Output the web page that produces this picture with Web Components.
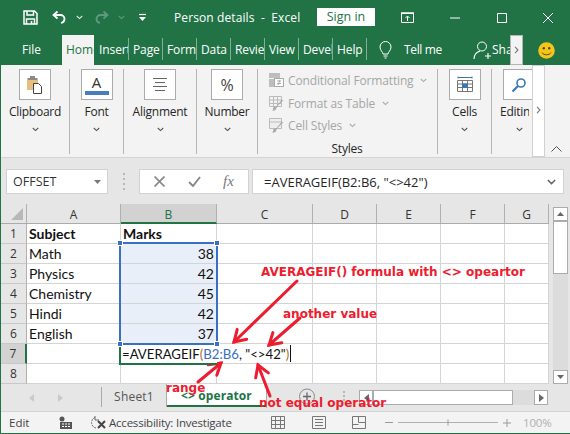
<!DOCTYPE html>
<html><head><meta charset="utf-8"><title>Person details - Excel</title>
<style>
html,body{margin:0;padding:0;background:#fff}
body{font-family:"Noto Sans","Open Sans",sans-serif;font-size:12px}
</style></head><body>
<x-app>
  <x-titlebar></x-titlebar>
  <x-tabs></x-tabs>
  <x-ribbon></x-ribbon>
  <x-formula></x-formula>
  <x-sheet></x-sheet>
  <x-sheetbar></x-sheetbar>
  <x-status></x-status>
  <x-notes></x-notes>
</x-app>
<script>
function def(name, css, html, init){
  customElements.define(name, class extends HTMLElement{
    constructor(){super();const r=this.attachShadow({mode:'open'});
      r.innerHTML='<style>'+css+'</style>'+html; if(init)init(r,this);}
  });
}
const UI='font-family:"Open Sans","Noto Sans",sans-serif;';
const chev=(c='#555')=>`<svg width="7" height="5" viewBox="0 0 7 5"><path d="M.8 1l2.700 2.600L6.200 1" fill="none" stroke="${c}" stroke-width="1.100"/></svg>`;

def('x-app',`:host{display:flex;flex-direction:column;position:relative;width:570px;height:434px;box-sizing:border-box;border-left:1px solid #217346;border-bottom:1px solid #217346;overflow:hidden;background:#f3f3f3}`,`<slot></slot>`);

def('x-titlebar',`:host{display:flex;align-items:center;height:35px;background:#217346;color:#fff;margin-left:-1px;${UI}font-size:12px;position:relative}
svg{display:block;flex:none}
.t{width:143px;flex:none;margin-left:28px;white-space:pre;letter-spacing:.1px}
.s{flex:none;width:58px;height:18px;background:#fff;color:#217346;text-align:center;line-height:18px;font-size:12.500px;margin-top:-2px}
`,`
<svg style="margin-left:23px" width="15" height="15" viewBox="0 0 15 15"><path d="M1 1h10.500L14 3.500V14H1z M4 1v4h6.500V1 M3.500 14V9h8v5 M8.500 11v3" fill="none" stroke="#fff" stroke-width="1.500"/></svg>
<svg style="margin-left:14px" width="15" height="15" viewBox="0 0 15 15"><path d="M5.500 1.500L1.500 5l4 3.500" fill="none" stroke="#fff" stroke-width="1.800"/><path d="M2 5h6.500a4 4 0 0 1 4 4c0 2-1.500 3.500-3.500 4" fill="none" stroke="#fff" stroke-width="1.800"/></svg>
<span style="margin-left:9px;display:flex">${chev('#dfe9e3')}</span>
<svg style="margin-left:11px" width="15" height="15" viewBox="0 0 15 15"><path d="M9.500 1.500l4 3.500-4 3.500" fill="none" stroke="#5f9a7e" stroke-width="1.800"/><path d="M13 5H6.500a4 4 0 0 0-4 4c0 2 1.500 3.500 3.500 4" fill="none" stroke="#5f9a7e" stroke-width="1.800"/></svg>
<span style="margin-left:9px;display:flex">${chev('#5f9a7e')}</span>
<svg style="margin-left:14px" width="7" height="9" viewBox="0 0 7 9"><path d="M0 1.500h7" stroke="#fff" stroke-width="1.200"/><path d="M0 4h7L3.500 8z" fill="#fff"/></svg>
<span class="t">Person details  -  Excel</span>
<span class="s">Sign in</span>
<svg style="margin-left:26px" width="13" height="11" viewBox="0 0 13 11"><path d="M.5 1.500h12v9H.5z" fill="none" stroke="#fff"/><path d="M6.500 9V4.500M4.500 6l2-2 2 2" fill="none" stroke="#fff"/><path d="M0 1h13" stroke="#fff" stroke-width="1.500"/></svg>
<svg style="margin-left:36px" width="10" height="2" viewBox="0 0 10 2"><path d="M0 1h10" stroke="#fff"/></svg>
<svg style="margin-left:37px" width="10" height="10" viewBox="0 0 10 10"><path d="M.5.500h9v9h-9z" fill="none" stroke="#fff"/></svg>
<svg style="margin-left:36px" width="10" height="10" viewBox="0 0 10 10"><path d="M0 0l10 10M10 0L0 10" fill="none" stroke="#fff"/></svg>
`);

def('x-tabs',`:host{display:flex;height:30px;background:#217346;color:#fff;margin-left:-1px;${UI}font-size:12px;position:relative;align-items:stretch}
.f{width:62px;flex:none;padding-left:22px;box-sizing:border-box;line-height:30px}
.tab{flex:none;width:34px;box-sizing:border-box;overflow:hidden;white-space:nowrap;padding-left:4px;line-height:30px;position:relative}
.tab::after{content:"";position:absolute;right:0;top:3px;bottom:5px;width:1px;background:#7fb096}
.on{background:#f3f3f3;color:#217346;width:32px;margin-right:1px}
.on::after{display:none}
.n{letter-spacing:-.1px}
.more{position:absolute;left:510px;top:0;width:13px;height:30px;box-sizing:border-box;background:#f3f3f3;border:1px solid #b5b5b5;display:flex;align-items:center;justify-content:center}
svg{display:block}
.it{display:flex;align-items:center;flex:none;line-height:30px}
`,`
<span class="f">File</span>
<span class="tab on">Home</span>
<span class="tab n">Insert</span><span class="tab n">Page</span><span class="tab n">Formulas</span><span class="tab n">Data</span><span class="tab n">Review</span><span class="tab n">View</span><span class="tab n">Developer</span><span class="tab n">Help</span>
<span class="it" style="margin-left:12px"><svg width="13" height="19" viewBox="0 0 13 19"><path d="M4 13c0-2-3-3.500-3-7a5.500 5.500 0 0 1 11 0c0 3.500-3 5-3 7z M4.500 15h4M5.500 17h2" fill="none" stroke="#fff"/></svg></span>
<span class="it" style="margin-left:12px;letter-spacing:-.35px;width:38px;white-space:nowrap">Tell me</span>
<span class="it" style="margin-left:31px"><svg width="18" height="19" viewBox="0 0 18 19"><circle cx="9" cy="5.500" r="4.500" fill="none" stroke="#fff"/><path d="M1 18c0-4 3-7 6-8M12 15h6M15 12v6" fill="none" stroke="#fff" stroke-width="1.100"/></svg></span>
<span class="it" style="margin-left:1px;width:18px;overflow:hidden">Share</span>
<span class="more"><svg width="5" height="8" viewBox="0 0 5 8"><path d="M1 .8L4 4 1 7.200" fill="none" stroke="#777" stroke-width="1.100"/></svg></span>
<svg style="position:absolute;left:538px;top:7px" width="17" height="17" viewBox="0 0 17 17"><circle cx="8.500" cy="8.500" r="8.300" fill="#f5c518"/><circle cx="5.800" cy="6.300" r="1.200" fill="#5a4a10"/><circle cx="11.200" cy="6.300" r="1.200" fill="#5a4a10"/><path d="M4 10.500c1.500 3 7.500 3 9 0" fill="none" stroke="#5a4a10"/></svg>
`);

const big=(label,w,icon,sep=true)=>`<div class="g" style="width:${w}px${sep?'':';border:0'}"><div class="b">${icon}</div><div class="l">${label}</div><div class="c">${chev()}</div></div>`;
def('x-ribbon',`:host{display:flex;height:93px;box-sizing:border-box;background:#f3f3f3;border-bottom:1px solid #d4d4d4;padding:4px 0 3px;color:#262626;${UI}font-size:12px;position:relative}
.g{flex:none;box-sizing:border-box;border-right:1px solid #b5b5b5;display:flex;flex-direction:column;align-items:center;overflow:hidden}
.b{width:32px;height:31px;box-sizing:border-box;border:1px solid #ababab;background:#fff;display:flex;align-items:center;justify-content:center;flex:none}
.l{margin-top:3px;height:18px;line-height:18px;white-space:nowrap;letter-spacing:-.25px}
.c{height:12px;display:flex;align-items:center;justify-content:center;margin-top:2px}
svg{display:block}
.st{width:180px;flex:none;box-sizing:border-box;border-right:1px solid #b5b5b5;position:relative;padding:0 0 0 11px;display:flex;flex-direction:column;color:#a6a6a6}
.r{display:flex;align-items:center;height:23px;gap:4px;white-space:nowrap;letter-spacing:-.15px}
.r svg:last-child{margin-left:3px}
.sl{margin-top:auto;text-align:center;color:#262626;line-height:24px;height:17px;padding-right:12px;letter-spacing:-.2px}
.ed{width:44px;align-items:flex-start;padding-left:11px;border:0}
.ed .l{width:29px;overflow:hidden;margin-left:-3px}
.ed .c{width:32px}
.sc{position:absolute;left:531px;top:0;bottom:0;width:13px;box-sizing:border-box;background:#fff;border:1px solid #d0d0d0;display:flex;align-items:center;justify-content:center;padding-bottom:3px}
.up{position:absolute;left:550px;top:81px}
`,
big('Clipboard',69,`<svg width="16" height="18" viewBox="0 0 16 18"><path d="M0 2h11v12H0z" fill="#e6bf80"/><path d="M3 0h5v2h2v2H1V2h2z" fill="#8a8a8a"/><path d="M6.500 7.500h5l3 3v7h-8z" fill="#fff" stroke="#444"/></svg>`)+
big('Font',54,`<span style="display:flex;flex-direction:column;align-items:center;font-size:15px;line-height:15px;color:#333"><span>A</span><span style="width:24px;height:4px;background:#4a7ebb;margin-top:1px"></span></span>`)+
big('Alignment',73,`<svg width="14" height="13" viewBox="0 0 14 13"><path d="M0 .5h14M2 4.500h10M0 8.500h14M2 12.500h10" stroke="#666"/></svg>`)+
big('Number',61,`<span style="font-size:16px;color:#444;line-height:18px">%</span>`)+
`<div class="st">
<div class="r"><svg width="15" height="15" viewBox="0 0 15 15"><path d="M0 0h11v5H0zM0 6h5v8H0z" fill="#bdbdbd"/><rect x="5.500" y="5.500" width="9" height="8" fill="#fff" stroke="#aaa"/><path d="M8 8h4M8 10.500h4M11 7l-2 5" stroke="#999" fill="none" stroke-width=".8"/></svg><span>Conditional Formatting</span>${chev('#aaa')}</div>
<div class="r"><svg width="15" height="15" viewBox="0 0 15 15"><path d="M.5.500h12v10H.500zM4.500.5v10M8.500.5v10M.5 4h12M.5 7.500h12" fill="none" stroke="#bbb"/><path d="M14.500 4l-6 6-2 4-3 1 1-4 3-1 5-6z" fill="#aaa"/></svg><span>Format as Table</span>${chev('#aaa')}</div>
<div class="r"><svg width="15" height="15" viewBox="0 0 15 15"><path d="M.5.500h12v10H.500zM.5 4h12" fill="#eee" stroke="#bbb"/><path d="M14.500 4l-6 6-2 4-3 1 1-4 3-1 5-6z" fill="#aaa"/></svg><span>Cell Styles</span>${chev('#aaa')}</div>
<div class="sl">Styles</div></div>`+
big('Cells',54,`<svg width="16" height="18" viewBox="0 0 16 18"><path d="M1 1.500h14M1 .5v2M15 .5v2M5 1.500h6" stroke="#3a78b5"/><path d="M.5 4.500h15v11H.5zM.5 8h15M.5 11.500h15M5.500 4.500v11M10.500 4.500v11" fill="#fff" stroke="#777"/><rect x="5" y="7.500" width="6" height="4.500" fill="#3a78b5"/></svg>`)+
`<div class="g ed"><div class="b"><svg width="16" height="16" viewBox="0 0 16 16"><circle cx="10" cy="6" r="4" fill="none" stroke="#3a78b5" stroke-width="1.600"/><path d="M7 9l-5.500 5.500" stroke="#3a78b5" stroke-width="2.200"/></svg></div><div class="l">Editing</div><div class="c">${chev()}</div></div>
<span class="sc"><svg width="5" height="8" viewBox="0 0 5 8"><path d="M1 .8L4 4 1 7.200" fill="none" stroke="#777" stroke-width="1.100"/></svg></span>
<svg class="up" width="11" height="6" viewBox="0 0 11 6"><path d="M.5 5.500l5-5 5 5" fill="none" stroke="#555"/></svg>`);

def('x-formula',`:host{display:flex;height:46px;box-sizing:border-box;background:#e6e6e6;padding:11px 6px 10px 5px;${UI}font-size:12.500px;color:#333}
.box{background:#fff;border:1px solid #d2d2d2;box-sizing:border-box;display:flex;align-items:center;height:25px;flex:none}
.n{width:102px;padding:0 6px;justify-content:space-between;font-size:12.500px}
.d{width:31px;display:flex;flex-direction:column;gap:3px;align-items:center;justify-content:center;flex:none}
.d i{width:2px;height:2px;background:#b8b8b8;display:block}
.fx{width:110px;justify-content:space-around;padding:0 3px;color:#8a8a8a}
.bar{flex:1;margin-left:3px;padding:0 7px 0 11px;justify-content:space-between;color:#262626;white-space:pre;font-size:13px}
em{font:italic 15px "Liberation Serif",serif;color:#777}
svg{display:block}
`,`<div class="box n"><span>OFFSET</span><svg width="7" height="4" viewBox="0 0 7 4"><path d="M0 0h7L3.500 4z" fill="#777"/></svg></div>
<div class="d"><i></i><i></i><i></i><i></i></div>
<div class="box fx"><svg width="11" height="11" viewBox="0 0 11 11"><path d="M.5.500l10 10M10.500.5l-10 10" stroke="#8a8a8a" stroke-width="1.700"/></svg><svg width="13" height="11" viewBox="0 0 13 11"><path d="M1 6l4 4 7-9" fill="none" stroke="#8a8a8a" stroke-width="2"/></svg><em>fx</em></div>
<div class="box bar"><span>=AVERAGEIF(B2:B6, "&lt;&gt;42")</span><svg width="9" height="6" viewBox="0 0 9 6"><path d="M.8 1l3.700 3.600L8.200 1" fill="none" stroke="#666" stroke-width="1.500"/></svg></div>`);

def('x-sheet',`:host{display:flex;height:180px;background:#e6e6e6;font-family:"Lato","Carlito",sans-serif;color:#111}
.g{display:grid;grid-template-columns:26px 94px 96px 96px 64px 64px 64px 44px;grid-template-rows:repeat(9,20px);background:#fff;position:relative;flex:none;height:180px}
.g>div{box-sizing:border-box;border-right:1px solid #d4d4d4;border-bottom:1px solid #d4d4d4;font-size:14px;line-height:19px;padding:0 2px;white-space:nowrap;overflow:visible}
.g>div.h{background:#e6e6e6;border-color:#b0b0b0;text-align:center;${UI}font-size:12px;color:#333;padding:0;line-height:20px}
.g>div.ch{border-bottom:1px solid #ababab;padding-top:2px;line-height:17px;height:20px}
.g>div.rh{border-bottom-color:#c8c8c8;line-height:19px}
.g>div.sel{background:#d2d2d2;color:#217346}
.g>div.cb{border-bottom:2px solid #217346}
.g>div.r7{border-right:2px solid #217346;color:#333}
.g>div.num{text-align:right;background:#e8eff8;padding-right:2px}
.g>div.b{font-weight:700}
.g>div.corner{position:relative}
.corner::after{content:"";position:absolute;right:3px;bottom:3px;border-style:solid;border-width:0 0 12px 12px;border-color:transparent transparent #b8b8b8 transparent}
.g>div.range{grid-area:3/3/8/4;border:2px solid #3a6fc4;margin:-2px 0 0 -2px;position:relative;background:transparent;padding:0;width:99px;height:103px;z-index:2}
.hd{position:absolute;width:4px;height:4px;background:#3a6fc4;border:1px solid #fff}
.g>div.act{grid-area:8/3/9/4;border:0;border-left:2px solid #217346;border-top:2px solid #217346;border-bottom:2px solid #217346;margin:-1px 0 0 -2px;padding:0 0 0 1px;background:#fff;font-size:13.200px;line-height:18px;height:22px;z-index:1}
.act .cr{display:inline-block;width:1px;height:17px;background:#111;vertical-align:top;margin-left:1px}
.act b{font-weight:400;color:#3a6fc4}.act u{text-decoration:none;color:#b06a1f}
.sb{flex:none;width:15px;margin-left:4px;display:flex;flex-direction:column;padding-top:3px;box-sizing:border-box}
.btn{height:14px;box-sizing:border-box;background:#fff;border:1px solid #ababab;display:flex;align-items:center;justify-content:center;flex:none}
.th{height:53px;background:#fff;border:1px solid #ababab;box-sizing:border-box;flex:none}
.tr{flex:1;background:#dcdcdc}
svg{display:block}
`,`<div class="g" id="g"></div><div class="sb"><div class="btn"><svg width="7" height="4" viewBox="0 0 7 4"><path d="M3.500 0L7 4H0z" fill="#666"/></svg></div><div class="th"></div><div class="tr"></div><div class="btn"><svg width="7" height="4" viewBox="0 0 7 4"><path d="M0 0h7L3.500 4z" fill="#666"/></svg></div></div>`,
(r)=>{
  const g=r.getElementById('g');let h='';
  const at=(row,col)=>`style="grid-row:${row};grid-column:${col}"`;
  h+=`<div class="h ch corner" ${at(1,1)}></div>`;
  'ABCDEFG'.split('').forEach((c,k)=>{h+=`<div class="h ch${c=='B'?' sel cb':''}" ${at(1,k+2)}>${c}</div>`});
  const d=[['Subject','Marks'],['Math','38'],['Physics','42'],['Chemistry','45'],['Hindi','42'],['English','37'],['',''],['','']];
  d.forEach((row,i)=>{
    const R=i+2;
    h+=`<div class="h rh${i==6?' sel r7':''}" ${at(R,1)}>${i+1}</div>`;
    h+=`<div class="${i==0?'b':''}" ${at(R,2)}>${row[0]}</div>`;
    h+=`<div class="${i==0?'b':(i<6?'num':'')}" ${at(R,3)}>${row[1]}</div>`;
    for(let k=0;k<5;k++)h+=`<div ${at(R,4+k)}></div>`;
  });
  h+=`<div class="range"><span class="hd" style="left:-4px;top:-4px"></span><span class="hd" style="right:-4px;top:-4px"></span><span class="hd" style="left:-4px;bottom:-4px"></span><span class="hd" style="right:-4px;bottom:-4px"></span></div>`;
  h+=`<div class="act">=AVERAGEIF<u>(</u><b>B2:B6</b>, "&lt;&gt;42"<u>)</u><span class="cr"></span></div>`;
  g.innerHTML=h;
});

def('x-sheetbar',`:host{display:flex;align-items:flex-start;height:27px;box-sizing:border-box;background:#e6e6e6;${UI}font-size:12px;color:#444;position:relative}
svg{display:block;flex:none}
.nav{width:100px;flex:none;display:flex;gap:24px;justify-content:flex-start;padding:10px 0 0 28px;box-sizing:border-box}
.sep{width:1px;height:20px;background:#ababab;margin-top:3px;flex:none}
.t1{width:64px;flex:none;text-align:center;line-height:26px;color:#555;letter-spacing:.2px;height:23px;border-right:1px solid #ababab}
.t2{width:99px;height:23px;flex:none;box-sizing:border-box;background:#fff;border-bottom:2px solid #217346;color:#217346;font-weight:700;text-align:center;line-height:23px;letter-spacing:.1px}
.edge{width:1px;height:24px;background:#ababab;flex:none}
.plus{margin-left:32px;margin-top:4px}
.dots{width:2px;margin-left:27px;margin-top:7px;display:flex;flex-direction:column;gap:2px;flex:none}
.dots i{display:block;width:2px;height:2px;background:#b8b8b8}
.hs{margin-left:14px;margin-top:6px;width:189px;height:15px;display:flex;background:#dcdcdc;flex:none}
.ab{width:14px;height:15px;box-sizing:border-box;border:1px solid #ababab;background:#fff;display:flex;align-items:center;justify-content:center;flex:none}
.hth{width:140px;box-sizing:border-box;border:1px solid #ababab;background:#fff;flex:none}
.sp{flex:1}
`,`<div class="nav"><svg width="5" height="8" viewBox="0 0 5 8"><path d="M5 0v8L0 4z" fill="#c9c9c9"/></svg><svg width="5" height="8" viewBox="0 0 5 8"><path d="M0 0v8l5-4z" fill="#c9c9c9"/></svg></div>
<div class="sep"></div><div class="t1">Sheet1</div><div class="t2">&lt;&gt; operator</div><div class="edge"></div>
<svg class="plus" width="17" height="17" viewBox="0 0 17 17"><circle cx="8" cy="8.500" r="7.500" fill="none" stroke="#8a8a8a"/><path d="M8 4.500v8M4 8.500h8" stroke="#666" stroke-width="1.300"/></svg>
<div class="dots"><i></i><i></i><i></i></div>
<div class="hs"><div class="ab"><svg width="5" height="8" viewBox="0 0 5 8"><path d="M5 0v8L0 4z" fill="#666"/></svg></div><div class="hth"></div><div class="sp"></div><div class="ab"><svg width="5" height="8" viewBox="0 0 5 8"><path d="M0 0v8l5-4z" fill="#666"/></svg></div></div>`);

def('x-status',`:host{display:flex;align-items:center;height:22px;box-sizing:border-box;border-top:1px solid #d4d4d4;background:#f3f3f3;${UI}font-size:11.500px;color:#444;flex:none}
svg{display:block;flex:none}
.e{margin-left:8px;width:50px;flex:none}
.a{margin-left:2px;white-space:nowrap;width:162px;flex:none;letter-spacing:-.22px}
.p{color:#b0b0b0;margin-left:12px;font-size:11.500px;letter-spacing:-.2px}
`,`<span class="e">Edit</span>
<svg width="14" height="14" viewBox="0 0 14 14"><circle cx="3" cy="3" r="2.500" fill="#555"/><path d="M1 6h12v7H1z" fill="#555"/><path d="M3 8h2M6 8h2M9 8h2M3 10.500h2M6 10.500h2M9 10.500h2" stroke="#fff"/></svg>
<svg style="margin-left:16px" width="18" height="15" viewBox="0 0 18 15"><path d="M6 2.500a5.500 5.500 0 0 0 1 10.500" fill="none" stroke="#666" stroke-dasharray="2 1"/><path d="M6 1v4h4" fill="none" stroke="#666"/><path d="M9 6l7 7M16 6l-7 7" stroke="#444" stroke-width="2"/></svg>
<span class="a">Accessibility: Investigate</span>
<svg width="14" height="13" viewBox="0 0 14 13"><path d="M.5.500h13v12H.500zM.5 4.500h13M.5 8.500h13M4.500.5v12M9.500.5v12" fill="none" stroke="#777"/></svg>
<svg style="margin-left:27px" width="14" height="13" viewBox="0 0 14 13"><path d="M.5.500h13v12H.500z M3 3.500h8M3 6.500h8M3 9.500h8" fill="none" stroke="#777"/></svg>
<svg style="margin-left:26px" width="14" height="13" viewBox="0 0 14 13"><path d="M.5.500h13v12H.500z M6.500.5v6h7M.5 8.500h6" fill="none" stroke="#777"/></svg>
<svg style="margin-left:19px" width="8" height="1" viewBox="0 0 8 1"><path d="M0 .5h8" stroke="#999"/></svg>
<svg style="margin-left:5px" width="100" height="7" viewBox="0 0 100 7"><path d="M0 3.500h100" stroke="#b0b0b0"/><path d="M50 .5v6" stroke="#999"/></svg>
<svg style="margin-left:5px" width="8" height="8" viewBox="0 0 8 8"><path d="M0 4h8M4 0v8" stroke="#999"/></svg>
<span class="p">100%</span>`);

const arr=(x1,y1,x2,y2)=>{const a=Math.atan2(y2-y1,x2-x1),s=13;
 const p=d=>[(x2-s*Math.cos(a+d)).toFixed(1),(y2-s*Math.sin(a+d)).toFixed(1)].join(' ');
 return `<path d="M${x1} ${y1}L${x2} ${y2}"/><path d="M${p(.55)}L${x2} ${y2}L${p(-.55)}"/>`;};
def('x-notes',`:host{position:absolute;left:-1px;top:0;width:570px;height:434px;pointer-events:none;display:block;font-family:"DejaVu Sans",sans-serif;font-weight:700;font-size:12px;color:#ed1c2e}
svg{position:absolute;left:0;top:0}
span{position:absolute;white-space:nowrap;line-height:14px}
`,`<svg width="570" height="434" fill="none" stroke="#ed1c2e" stroke-width="3" stroke-linecap="round">${arr(297,281,234,342)}${arr(300,318,269,345)}${arr(198,382,221,363)}${arr(270,396,258,365)}</svg>
<span style="left:261px;top:265px">AVERAGEIF() formula with &lt;&gt; opeartor</span>
<span style="left:283px;top:307px">another value</span>
<span style="left:166px;top:381px">range</span>
<span style="left:259px;top:396px">not equal operator</span>`);
</script>
</body></html>
